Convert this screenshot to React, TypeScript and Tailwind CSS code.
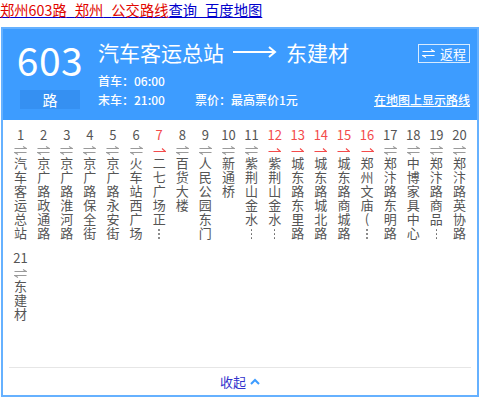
import React from "react";

type Stop = { no: number; name: string; more?: boolean; oneWay?: boolean };

const stops: Stop[] = [
  { no: 1, name: "汽车客运总站" },
  { no: 2, name: "京广路政通路" },
  { no: 3, name: "京广路淮河路" },
  { no: 4, name: "京广路保全街" },
  { no: 5, name: "京广路永安街" },
  { no: 6, name: "火车站西广场" },
  { no: 7, name: "二七广场正", more: true, oneWay: true },
  { no: 8, name: "百货大楼" },
  { no: 9, name: "人民公园东门" },
  { no: 10, name: "新通桥" },
  { no: 11, name: "紫荆山金水", more: true },
  { no: 12, name: "紫荆山金水", more: true, oneWay: true },
  { no: 13, name: "城东路东里路", oneWay: true },
  { no: 14, name: "城东路城北路", oneWay: true },
  { no: 15, name: "城东路商城路", oneWay: true },
  { no: 16, name: "郑州文庙(", more: true, oneWay: true },
  { no: 17, name: "郑汴路东明路" },
  { no: 18, name: "中博家具中心" },
  { no: 19, name: "郑汴路商品", more: true },
  { no: 20, name: "郑汴路英协路" },
  { no: 21, name: "东建材" },
];

function BothWays({ color = "#9a9a9a" }: { color?: string }) {
  return (
    <svg width="13" height="9" viewBox="0 0 13 9" fill="none" className="block">
      <path d="M0.5 2.5H12.5L9 0.5" stroke={color} strokeWidth="1.1" />
      <path d="M12.5 6.5H0.5L4 8.5" stroke={color} strokeWidth="1.1" />
    </svg>
  );
}

function OneWay() {
  return (
    <svg width="13" height="9" viewBox="0 0 13 9" fill="none" className="block">
      <path d="M0.5 5.5H12.5L9 2.5" stroke="#f34b4b" strokeWidth="1.2" />
    </svg>
  );
}

// vertical ellipsis for cut-off stop names
function VDots() {
  return (
    <div className="mt-[3px] flex flex-col items-center gap-[2.5px]">
      <span className="w-[1.5px] h-[1.5px] rounded-full bg-[#666]" />
      <span className="w-[1.5px] h-[1.5px] rounded-full bg-[#666]" />
      <span className="w-[1.5px] h-[1.5px] rounded-full bg-[#666]" />
    </div>
  );
}

export default function App() {
  return (
    <div className="w-[482px] h-[400px] bg-white font-['Noto_Sans_CJK_SC','Liberation_Sans',sans-serif] overflow-hidden">
      {/* result title */}
      <a href="#" className="block h-[27px] text-[14.3px] leading-[20px] underline text-[#0000cc] whitespace-nowrap">
        <span className="text-[#e10600]">郑州603路</span>_<span className="text-[#e10600]">郑州</span>_
        <span className="text-[#e10600]">公交路线</span>查询_百度地图
      </a>

      <div className="ml-[1px] w-[478px] h-[370px] border-2 border-[#66b1ff] flex flex-col">
        {/* header */}
        <div className="h-[91px] bg-[#3d9cff] flex pl-[17px] pr-[7px] text-white">
          <div className="w-[60px] flex flex-col items-center pt-[7px]">
            <div className="text-[39px] leading-[46px] tracking-[0.5px]">603</div>
            <div className="mt-[8px] w-[60px] h-[19px] bg-[#3590f2] text-[15px] leading-[19px] text-center">路</div>
          </div>

          <div className="flex-1 ml-[18px] pt-[9px]">
            <div className="flex items-start justify-between">
              <div className="flex items-center text-[21px] leading-[28px]">
                <span>汽车客运总站</span>
                <svg width="44" height="14" viewBox="0 0 44 14" fill="none" className="mx-[9px]">
                  <path d="M0 7H42" stroke="white" strokeWidth="2" />
                  <path d="M36 2L42 7L36 12" stroke="white" strokeWidth="2" />
                </svg>
                <span>东建材</span>
              </div>
              <button className="mt-[6px] w-[52px] h-[19px] border border-white/80 flex items-center justify-center gap-[5px] text-[13px] leading-[17px]">
                <BothWays color="white" />
                <span>返程</span>
              </button>
            </div>
            <div className="mt-[5px] text-[12px] leading-[19px] font-medium">首车：06:00</div>
            <div className="flex items-center text-[12px] leading-[19px] font-medium">
              <span className="w-[97px]">末车：21:00</span>
              <span>票价：最高票价1元</span>
              <a href="#" className="ml-auto underline">在地图上显示路线</a>
            </div>
          </div>
        </div>

        {/* stops */}
        <div className="flex-1 flex flex-col px-[6px]">
          <div className="h-[247px] pt-[7px]">
            <div className="grid grid-cols-20 gap-y-[10px]">
              {stops.map((s) => (
                <div key={s.no} className="flex flex-col items-center">
                  <div className={`text-[13px] leading-[16px] ${s.oneWay ? "text-[#f34b4b]" : "text-[#555]"}`}>
                    {s.no}
                  </div>
                  <div className="mt-[3px] h-[9px]">{s.oneWay ? <OneWay /> : <BothWays />}</div>
                  <div className="mt-[1px] w-[13px] text-[13px] leading-[14px] text-[#555] break-all text-center">
                    {s.name}
                  </div>
                  {s.more && <VDots />}
                </div>
              ))}
            </div>
          </div>
          <div className="border-t border-[#e6e6e6] flex-1 flex items-center justify-center gap-[4px]">
            <span className="text-[13px] text-[#3333cc]">收起</span>
            <svg width="10" height="7" viewBox="0 0 10 7" fill="none">
              <path d="M1 6L5 2L9 6" stroke="#3d9cff" strokeWidth="2" />
            </svg>
          </div>
        </div>
      </div>
    </div>
  );
}
